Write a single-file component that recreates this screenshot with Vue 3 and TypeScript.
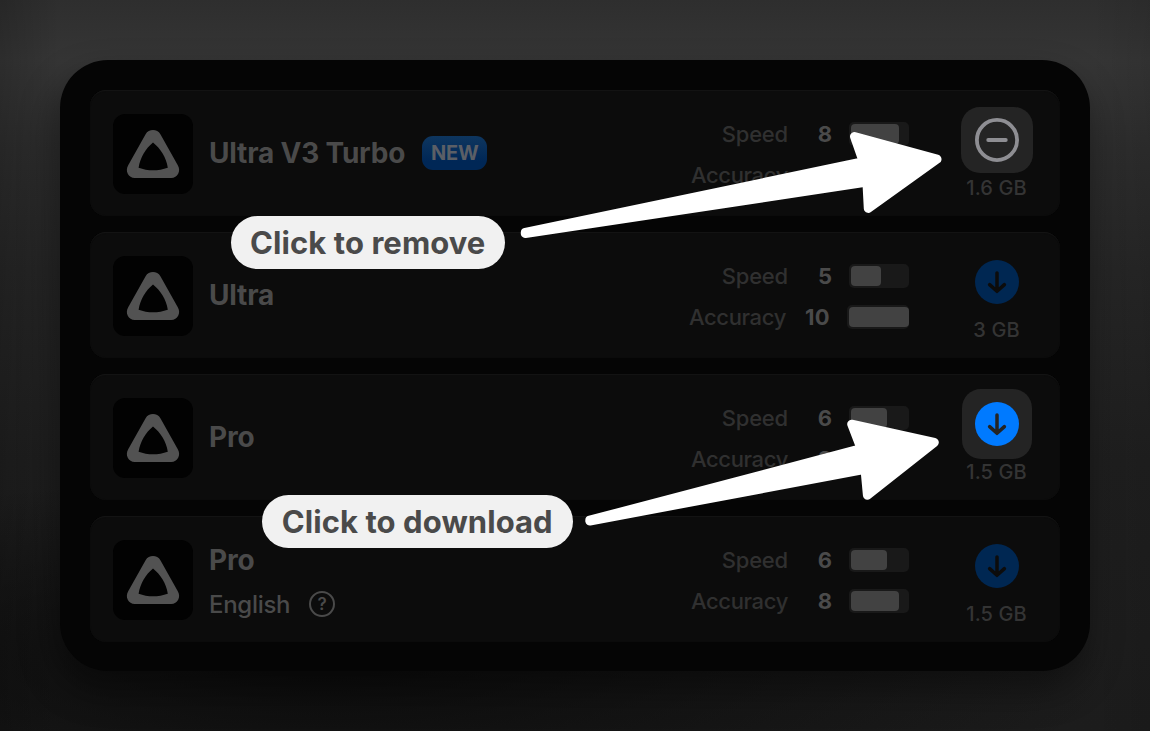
<script setup lang="ts">
interface Metric {
  label: string
  value: number
}

interface Model {
  name: string
  badge?: string
  language?: string
  metrics: Metric[]
  size: string
  action: 'remove' | 'download'
  spotlight?: boolean
}

const metrics = (speed: number, accuracy: number): Metric[] => [
  { label: 'Speed', value: speed },
  { label: 'Accuracy', value: accuracy },
]

const models: Model[] = [
  { name: 'Ultra V3 Turbo', badge: 'NEW', metrics: metrics(8, 8), size: '1.6 GB', action: 'remove', spotlight: true },
  { name: 'Ultra', metrics: metrics(5, 10), size: '3 GB', action: 'download' },
  { name: 'Pro', metrics: metrics(6, 8), size: '1.5 GB', action: 'download', spotlight: true },
  { name: 'Pro', language: 'English', metrics: metrics(6, 8), size: '1.5 GB', action: 'download' },
]
</script>

<template>
  <main class="stage">
    <section class="panel">
      <article v-for="(model, index) in models" :key="index" class="card">
        <div class="logo">
          <svg width="80" height="80" viewBox="0 0 80 80">
            <path
              class="logo-shape"
              fill-rule="evenodd"
              d="M32.6 20.2C35.7 14.6 44.3 14.6 47.4 20.2L64.8 51.3C68.3 57.2 64.6 64 58.2 64H21.8C15.4 64 11.7 57.2 15.2 51.3ZM40 28.6C32.5 34.8 27.4 43.3 25.6 53.8C34.8 57.2 45.2 57.2 54.8 53.8C53.2 43.3 47.6 34.8 40 28.6Z"
            />
          </svg>
        </div>
        <div class="info">
          <div class="title">
            <span class="name">{{ model.name }}</span>
            <span v-if="model.badge" class="badge">{{ model.badge }}</span>
          </div>
          <div v-if="model.language" class="language">
            <span class="language-name">{{ model.language }}</span>
            <span class="help">?</span>
          </div>
        </div>
        <div class="metrics">
          <div v-for="metric in model.metrics" :key="metric.label" class="metric" :class="{ full: metric.value === 10 }">
            <span class="label" :class="metric.label.toLowerCase()">{{ metric.label }}</span>
            <span class="value">{{ metric.value }}</span>
            <span class="track"><span class="fill" :style="{ width: metric.value * 6 + 'px' }"></span></span>
          </div>
        </div>
        <div class="action">
          <div class="button" :class="[model.action, { spotlight: model.spotlight }]">
            <svg v-if="model.action === 'remove'" width="44" height="44" viewBox="0 0 44 44">
              <circle class="ring" cx="22" cy="22" r="20.1" />
              <path class="minus" d="M13.2 22H30.8" />
            </svg>
            <svg v-else width="44" height="44" viewBox="0 0 44 44">
              <circle class="disc" cx="22" cy="22" r="22" />
              <path class="down" d="M22 12.9V31M14.6 24.6L22 31.3L29.4 24.6" />
            </svg>
          </div>
          <span class="size">{{ model.size }}</span>
        </div>
      </article>
    </section>

    <svg class="arrows" width="1150" height="731" viewBox="0 0 1150 731">
      <path d="M525.3 232.5L863.3 161.7L854.5 136.5L937 159.2L868.3 208.4L866.9 182.1L525.3 233.5Z" />
      <path d="M589.8 520.2L861.1 448.7L851.7 424.2L934.3 442.4L867.4 495.2L865 469.4L589.8 521Z" />
    </svg>
    <div class="callout callout-remove"><span>Click to remove</span></div>
    <div class="callout callout-download"><span>Click to download</span></div>
  </main>
</template>

<style>
body {
  margin: 0;
  background: #1a1a1a;
}
</style>

<style scoped>
.stage {
  position: relative;
  box-sizing: border-box;
  width: 1150px;
  height: 731px;
  padding: 60px;
  overflow: hidden;
  font-family: Inter, "Liberation Sans", sans-serif;
  background:
    linear-gradient(90deg, rgba(0, 0, 0, 0.16), rgba(0, 0, 0, 0) 60px, rgba(0, 0, 0, 0) 1090px, rgba(0, 0, 0, 0.08)),
    radial-gradient(ellipse 800px 190px at 28% 91%, rgba(6, 6, 6, 0.75), rgba(6, 6, 6, 0) 100%),
    linear-gradient(180deg, #2e2e2e 0, #353535 60px, #2d2d2d 150px, #262626 270px, #1f1f1f 460px, #1c1c1c 731px);
}

.panel {
  box-sizing: border-box;
  display: flex;
  flex-direction: column;
  gap: 16px;
  height: 611px;
  padding: 30px;
  border-radius: 48px;
  background: #050505;
  box-shadow: -4px 18px 36px rgba(0, 0, 0, 0.4);
}

.card {
  box-sizing: border-box;
  display: flex;
  flex: none;
  align-items: center;
  height: 126px;
  padding: 2px 27px 0 23px;
  border-radius: 16px;
  background: #0c0c0c;
  box-shadow: inset 0 2px 1px -1px #151515, inset 0 0 1px #121212;
}

.logo {
  width: 80px;
  height: 80px;
  border-radius: 12px;
  background: #020202;
}

.logo svg,
.button svg {
  display: block;
}

.logo-shape {
  fill: #525252;
}

.info {
  display: flex;
  flex: 1;
  flex-direction: column;
  gap: 10px;
  margin-left: 16px;
  color: #4a4a4a;
}

.title {
  display: flex;
  align-items: center;
  height: 34px;
  margin-top: -2px;
}

.name {
  font-size: 28px;
  font-weight: 700;
  letter-spacing: -0.2px;
  line-height: 34px;
}

.badge {
  box-sizing: border-box;
  width: 65px;
  height: 34px;
  margin-left: 17px;
  border-radius: 11px;
  background: linear-gradient(180deg, #0e365f, #002756 75%);
  color: #5b5f66;
  font-size: 20px;
  font-weight: 700;
  letter-spacing: -0.2px;
  line-height: 34px;
  text-align: center;
}

.language {
  display: flex;
  align-items: center;
  gap: 19px;
  height: 34px;
  margin-bottom: -6px;
}

.language-name {
  font-size: 24px;
  font-weight: 500;
  letter-spacing: -0.3px;
}

.help {
  box-sizing: border-box;
  width: 26px;
  height: 26px;
  border: 2px solid #4a4a4a;
  border-radius: 50%;
  font-size: 17px;
  font-weight: 600;
  line-height: 22px;
  text-align: center;
}

.metrics {
  display: flex;
  flex-direction: column;
  gap: 17px;
  margin-top: 1px;
}

.metric {
  display: flex;
  align-items: center;
  justify-content: flex-end;
  height: 24px;
  font-size: 22px;
  line-height: 24px;
}

.label {
  color: #303030;
  font-weight: 500;
  letter-spacing: -0.2px;
}

.accuracy {
  letter-spacing: -0.35px;
}

.value {
  width: 44px;
  color: #4a4a4a;
  font-weight: 700;
  text-align: right;
}

.track {
  box-sizing: border-box;
  width: 60px;
  height: 24px;
  margin-left: 17px;
  padding: 2px 0 2px 2px;
  border-radius: 5px;
  background: #191919;
}

.full .track {
  width: 62px;
}

.full .value {
  letter-spacing: 0.3px;
}

.fill {
  display: block;
  height: 20px;
  border-radius: 4px;
  background: #424242;
}

.action {
  display: flex;
  flex-direction: column;
  align-items: center;
  width: 72px;
  height: 92px;
  margin-left: 52px;
}

.button {
  display: flex;
  flex: none;
  align-items: center;
  justify-content: center;
  width: 70px;
  height: 70px;
  margin-top: -3px;
  margin-bottom: 1px;
  border-radius: 19px;
}

.button.remove {
  width: 72px;
  height: 66px;
  margin: -1px 0 3px;
}

.button.spotlight {
  background: #242424;
}

.ring,
.minus,
.down {
  fill: none;
  stroke-width: 3.8;
  stroke-linecap: round;
  stroke-linejoin: round;
}

.ring,
.minus {
  stroke: #8e8e93;
}

.disc {
  fill: #002752;
}

.down {
  stroke: #0c0c0c;
  stroke-width: 3.5;
}

.spotlight .disc {
  fill: #007aff;
}

.spotlight .down {
  stroke: #242424;
}

.size {
  margin-right: 1px;
  color: #343434;
  font-size: 20px;
  font-weight: 500;
  letter-spacing: 0.1px;
  line-height: 24px;
  white-space: nowrap;
}

.arrows {
  position: absolute;
  top: 0;
  left: 0;
}

.arrows path {
  fill: #fff;
  stroke: #fff;
  stroke-width: 9;
  stroke-linejoin: round;
}

.callout {
  position: absolute;
  display: flex;
  align-items: center;
  justify-content: center;
  height: 53px;
  border-radius: 27px;
  background: #f1f1f1;
  color: #4a4a4a;
  font-size: 31px;
  font-weight: 700;
  letter-spacing: 0.07px;
  white-space: nowrap;
}

.callout-remove {
  top: 215.5px;
  left: 230.5px;
  width: 274.5px;
}

.callout-download {
  top: 495px;
  left: 262px;
  width: 310.5px;
}
</style>
